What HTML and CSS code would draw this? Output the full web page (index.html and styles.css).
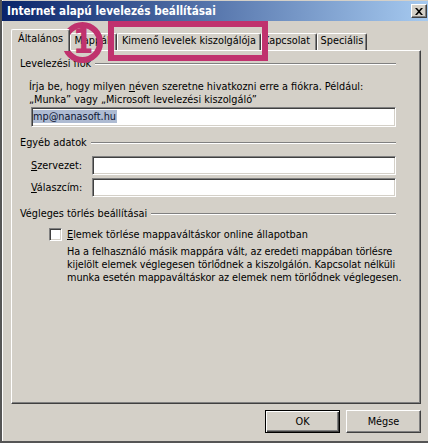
FILE: index.html
```html
<!DOCTYPE html>
<html lang="hu">
<head>
<meta charset="utf-8">
<title>Internet alapú levelezés beállításai</title>
<link rel="stylesheet" href="styles.css">
</head>
<body>
<div class="window">
  <div class="titlebar">
    <span class="title">Internet alapú levelezés beállításai</span>
    <span class="close"><svg width="8" height="7" viewBox="0 0 8 7"><path d="M0 0h2l2 2.3 2-2.3h2l-3 3.5 3 3.5h-2l-2-2.3-2 2.3h-2l3-3.5z" fill="#000"/></svg></span>
  </div>
  <div class="main">
    <div class="tabs">
      <div class="tab active t-alt">Általános</div>
      <div class="tab t-map">Mappák</div>
      <div class="tab t-kim">Kimenő levelek kiszolgálója</div>
      <div class="tab t-kap">Kapcsolat</div>
      <div class="tab t-spe">Speciális</div>
    </div>
    <div class="panel">
      <div class="ghead first"><span>Levelezési fiók</span><i class="rule"></i></div>
      <p class="desc">Írja be, hogy milyen <u>n</u>éven szeretne hivatkozni erre a fiókra. Például:<br>„Munka” vagy „Microsoft levelezési kiszolgáló”</p>
      <div class="field email"><span class="sel">mp@nanasoft.hu</span></div>

      <div class="ghead g2"><span>Egyéb adatok</span><i class="rule"></i></div>
      <div class="row r1"><span class="lbl"><u>S</u>zervezet:</span><div class="field grow"></div></div>
      <div class="row r2"><span class="lbl"><u>V</u>álaszcím:</span><div class="field grow"></div></div>

      <div class="ghead g3"><span>Végleges törlés beállításai</span><i class="rule"></i></div>
      <div class="check"><span class="box"></span><span><u>E</u>lemek törlése mappaváltáskor online állapotban</span></div>
      <p class="note">Ha a felhasználó másik mappára vált, az eredeti mappában törlésre<br>kijelölt elemek véglegesen törlődnek a kiszolgálón. Kapcsolat nélküli<br>munka esetén mappaváltáskor az elemek nem törlődnek véglegesen.</p>
    </div>
    <div class="buttons">
      <div class="btn default">OK</div>
      <div class="btn">Mégse</div>
    </div>
  </div>
  <div class="mark-box"></div>
  <svg class="mark-circle" width="43" height="43" viewBox="0 0 43 43">
    <circle cx="21.5" cy="21.5" r="17.5" fill="none" stroke="#c0326e" stroke-width="6"/>
    <text x="22" y="32" text-anchor="middle" class="mark-num">1</text>
  </svg>
</div>
</body>
</html>
```
FILE: styles.css
```css
* { box-sizing: border-box; }
html, body { margin: 0; padding: 0; }
body {
  background: #d4d0c8;
  font-family: "DejaVu Sans Condensed", "DejaVu Sans", sans-serif;
  font-stretch: condensed;
  font-size: 10.8px;
  line-height: 13px;
  color: #000;
}
u { text-decoration: underline; text-underline-offset: 1px; }
.window {
  position: relative;
  width: 428px;
  height: 443px;
  background: #d4d0c8;
  border-left: 2px solid #555;
  border-bottom: 2px solid #555;
  box-shadow: inset 1px 0 0 #fff;
  padding-top: 1px;
  display: flex;
  flex-direction: column;
  overflow: hidden;
}
.titlebar {
  height: 20px;
  display: flex;
  align-items: center;
  justify-content: space-between;
  padding: 0 1px 0 5px;
  background: linear-gradient(to right, #0a246a, #a6caf0);
}
.title { color: #fff; font-weight: bold; font-size: 11.7px; }
.close {
  width: 16px; height: 14px;
  display: flex; align-items: center; justify-content: center;
  background: #d4d0c8;
  border: 1px solid; border-color: #fff #404040 #404040 #fff;
  box-shadow: inset -1px -1px 0 #808080;
}
.main { flex: 1; padding: 8px 7px 0 9px; display: flex; flex-direction: column; }
.tabs { display: flex; align-items: flex-end; height: 21px; }
.tab {
  height: 17px;
  text-align: center;
  border: 1px solid; border-bottom: 0;
  border-color: #fff #404040 #fff #fff;
  border-radius: 2px 2px 0 0;
  box-shadow: inset -1px 0 0 #808080;
  background: #d4d0c8;
  white-space: nowrap;
}
.tab.active {
  height: 22px;
  margin-bottom: -1px;
  padding-top: 2px;
  position: relative;
  z-index: 1;
}
.t-alt { width: 59px; }
.t-map { width: 47px; }
.t-kim { width: 144px; }
.t-kap { width: 56px; text-align: left; padding-left: 1px; }
.t-spe { width: 50px; }
.panel {
  height: 354px;
  border: 1px solid; border-color: #fff #404040 #404040 #fff;
  box-shadow: inset -1px -1px 0 #808080;
  padding: 0 24px 0 8px;
}
.ghead { display: flex; align-items: center; gap: 4px; height: 13px; }
.ghead.first { margin-top: 6px; }
.ghead.g2 { margin-top: 9px; }
.ghead.g3 { margin-top: 10px; }
.rule { flex: 1; height: 2px; border-top: 1px solid #808080; border-bottom: 1px solid #fff; }
.desc { margin: 10px 0 0 9px; white-space: nowrap; }
.field {
  background: #fff;
  border: 1px solid; border-color: #808080 #fff #fff #808080;
  box-shadow: inset 1px 1px 0 #404040, inset -1px -1px 0 #d4d0c8;
}
.field.email { margin: 1px 0 0 11px; height: 20px; padding: 2px 0 0 1px; }
.sel { display: inline-block; background: #aebbd2; color: #0d1533; line-height: 13px; padding-right: 1px; }
.row { display: flex; align-items: center; margin-left: 11px; }
.row.r1 { margin-top: 7px; }
.row.r2 { margin-top: 3px; }
.lbl { width: 61px; }
.field.grow { flex: 1; height: 19px; }
.check { display: flex; align-items: center; gap: 5px; margin: 8px 0 0 29px; height: 13px; }
.box {
  width: 13px; height: 13px; background: #fff;
  border: 1px solid; border-color: #808080 #fff #fff #808080;
  box-shadow: inset 1px 1px 0 #404040, inset -1px -1px 0 #d4d0c8;
}
.note { margin: 4px 0 0 47px; white-space: nowrap; letter-spacing: -0.08px; }
.buttons { display: flex; justify-content: flex-end; gap: 6px; margin-top: 6px; }
.btn {
  width: 75px; height: 23px;
  display: flex; align-items: center; justify-content: center;
  border: 1px solid; border-color: #fff #404040 #404040 #fff;
  box-shadow: inset -1px -1px 0 #808080;
}
.btn.default {
  border-color: #000;
  box-shadow: inset 1px 1px 0 #fff, inset -1px -1px 0 #404040, inset -2px -2px 0 #808080;
}
.mark-box {
  position: absolute;
  left: 106px; top: 21px;
  width: 160px; height: 40px;
  border: 6px solid #c0326e;
}
.mark-circle { position: absolute; left: 59px; top: 21px; }
.mark-num { font-family: "DejaVu Sans", sans-serif; font-weight: bold; font-size: 33px; fill: #c0326e; }
```
